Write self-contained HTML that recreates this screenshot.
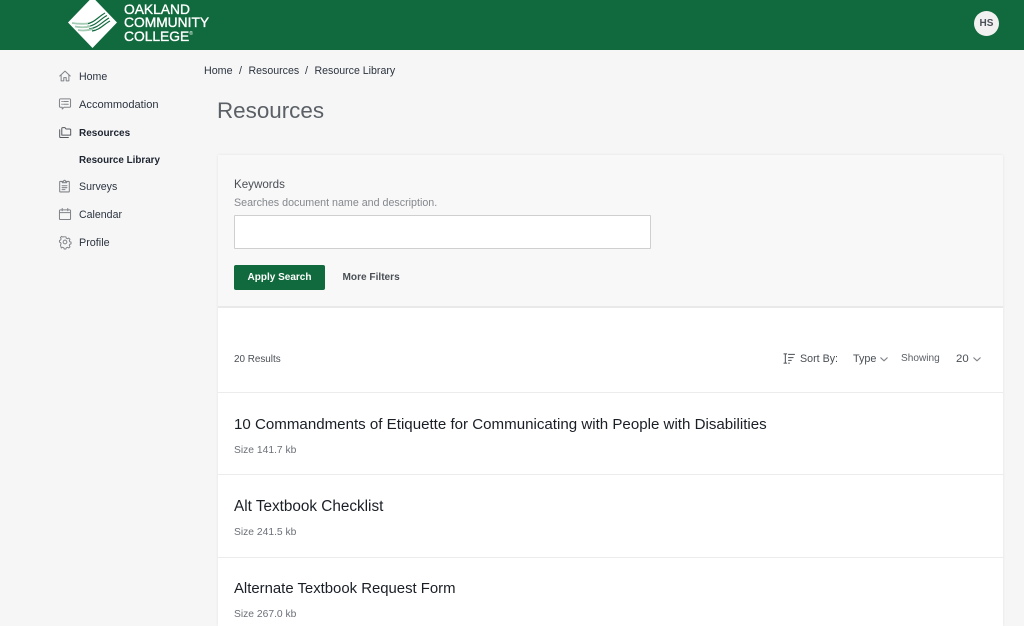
<!DOCTYPE html>
<html lang="en"><head><meta charset="utf-8"><title>Resources</title>
<style>
html,body{margin:0;padding:0;width:1024px;height:626px;overflow:hidden}
body{position:relative;background:#f6f6f6;font-family:"Liberation Sans",sans-serif;color:#212529}
.t{position:absolute;white-space:nowrap;line-height:1}
.hdr{position:absolute;left:0;top:0;width:1024px;height:50px;background:#116a3d}
svg{position:absolute;overflow:visible}
.nav{font-size:10.6px;color:#2c3440}
.b{font-weight:bold;color:#1d2430;font-size:10px}
.card{position:absolute;left:218px;top:155px;width:785px;height:471px;background:#fff;box-shadow:0 0 3px rgba(0,0,0,.08)}
.search{position:absolute;left:218px;top:155px;width:785px;height:153px;background:#f8f8f8;border-bottom:2px solid #e9e9e9;box-sizing:border-box}
.line{position:absolute;left:218px;width:785px;height:1px;background:#ececec}
.title{font-size:15.1px;color:#1a1f26}
.size{font-size:10.300px;color:#6b7077}
.i{fill:none;stroke:#808489;stroke-width:1.100;stroke-linecap:round;stroke-linejoin:round}
</style></head><body>
<div class="hdr"></div>
<svg style="left:68px;top:-3px" width="50" height="52" viewBox="0 0 50 52">
<polygon points="24.500,0 49,25.500 24.500,51 0,25.500" fill="#fff"/>
<g fill="none" stroke="#116a3d" stroke-width="1.200">
<path d="M18 27C26 26 30 20 37 16"/><path d="M19 29.500C28 29 32 22 39 18.500"/><path d="M21 32C30 31 34 25 41 21"/><path d="M24 34C32 33 36 27 42 24"/>
</g>
<g fill="none" stroke="#a5ccb5" stroke-width="1.800"><path d="M4 26C10 27 15 27 20 26.500"/><path d="M7 29.500C12 30.500 17 30.500 22 29.500"/><path d="M10 33C15 34 20 33.500 25 32"/></g>
</svg>
<div class="t" style="left:124px;top:3px;font-size:13.800px;line-height:13.400px;color:#fff;letter-spacing:0;white-space:normal;width:100px;-webkit-text-stroke:.35px #fff">OAKLAND<br>COMMUNITY<br>COLLEGE<sup style="font-size:5px;line-height:0;vertical-align:6px;-webkit-text-stroke:0">®</sup></div>
<div style="position:absolute;left:974px;top:11px;width:25px;height:25px;border-radius:50%;background:#f1f1f1"></div>
<div class="t" style="left:974px;top:19px;width:25px;text-align:center;font-size:10px;font-weight:bold;color:#4a5058">HS</div>

<svg class="i" style="left:58.500px;top:70px" width="12" height="12" viewBox="0 0 13 13"><path d="M.8 6.500 6.500 1.200l5.700 5.300M2.300 5.500v6.300h2.900V8.300h2.600v3.500h2.900V5.500"/></svg>
<div class="t nav" style="left:79px;top:72px">Home</div>
<svg class="i" style="left:58.500px;top:98px" width="12" height="12" viewBox="0 0 13 13"><path d="M1.500 1h10a1 1 0 0 1 1 1v7a1 1 0 0 1-1 1H5.500L3.500 12v-2h-2a1 1 0 0 1-1-1V2a1 1 0 0 1 1-1zM3 3.800h.7M5 3.800h5M3 6.800h.7M5 6.800h5"/></svg>
<div class="t nav" style="left:79px;top:100px;font-size:11.100px">Accommodation</div>
<svg class="i" style="left:58.500px;top:127px;stroke:#555a60" width="12" height="11" viewBox="0 0 13 12"><path d="M.7 3v7.500a1 1 0 0 0 1 1h8.500M3 8.800V1.700a1 1 0 0 1 1-1h2.500l1.200 1.500h4a1 1 0 0 1 1 1v5.600z"/></svg>
<div class="t nav b" style="left:79px;top:129px">Resources</div>
<div class="t nav b" style="left:79px;top:156px;font-size:9.850px">Resource Library</div>
<svg class="i" style="left:59px;top:179px" width="11" height="13.500" viewBox="0 0 11 14"><path d="M3.200 2.500H1a.6.6 0 0 0-.5.600v9.700a.6.6 0 0 0 .5.600h9a.6.6 0 0 0 .5-.6V3.100a.6.6 0 0 0-.5-.6H7.800M3.200 3.800V2.500H4.500C4.500 1 6.500 1 6.500 2.500h1.300v1.300zM3 7h5M3 9h5M3 11h3"/></svg>
<div class="t nav" style="left:79px;top:182px">Surveys</div>
<svg class="i" style="left:58.500px;top:208px" width="12" height="12" viewBox="0 0 13 13"><path d="M1.500 2h10a1 1 0 0 1 1 1v8.500a1 1 0 0 1-1 1h-10a1 1 0 0 1-1-1V3a1 1 0 0 1 1-1zM.5 5h12M3.500.5v2.500M9.500.5v2.500"/></svg>
<div class="t nav" style="left:79px;top:210px">Calendar</div>
<svg class="i" style="left:58.500px;top:236px" width="12" height="12" viewBox="0 0 13 13"><circle cx="6.500" cy="6.500" r="2"/><path d="M5.500.7h2l.4 1.600 1.400.6 1.400-.8 1.400 1.400-.8 1.400.6 1.400 1.400.4v2l-1.400.4-.6 1.400.8 1.400-1.400 1.400-1.400-.8-1.400.6-.4 1.400h-2l-.4-1.400-1.400-.6-1.400.8L1.300 10l.8-1.400-.6-1.400L.2 6.800v-2l1.300-.4.6-1.400-.8-1.400L2.700.2l1.400.8 1-.4z" transform="translate(.3 .2) scale(.96)"/></svg>
<div class="t nav" style="left:79px;top:238px;font-size:10.800px">Profile</div>

<div class="t" style="left:204px;top:66px;font-size:10.700px;color:#2c3440">Home</div>
<div class="t" style="left:239px;top:66px;font-size:10.700px;color:#2c3440">/</div>
<div class="t" style="left:248.500px;top:66px;font-size:10.600px;color:#2c3440">Resources</div>
<div class="t" style="left:305px;top:66px;font-size:10.700px;color:#2c3440">/</div>
<div class="t" style="left:314.500px;top:66px;font-size:10.600px;color:#2c3440">Resource Library</div>
<div class="t" style="left:217px;top:100px;font-size:22.400px;color:#5b6066">Resources</div>

<div class="card"></div>
<div class="search"></div>
<div class="t" style="left:234px;top:179px;font-size:11.600px;color:#4a4f55">Keywords</div>
<div class="t" style="left:234px;top:198px;font-size:10.700px;color:#84888d">Searches document name and description.</div>
<div style="position:absolute;left:234px;top:215px;width:417px;height:34px;box-sizing:border-box;background:#fff;border:1px solid #cfcfcf;border-radius:1px"></div>
<div style="position:absolute;left:234px;top:265px;width:91px;height:25px;background:#116a3d;border-radius:2px"></div>
<div class="t" style="left:234.500px;top:273px;width:90px;text-align:center;font-size:10px;font-weight:bold;color:#fff">Apply Search</div>
<div class="t" style="left:342.500px;top:273px;font-size:10.100px;font-weight:bold;color:#4a4f55">More Filters</div>

<div class="t" style="left:234px;top:355px;font-size:9.900px;color:#4a4f55">20 Results</div>
<svg class="i" style="left:782px;top:353px;stroke:#4a4f55" width="14" height="11" viewBox="0 0 14 12"><path d="M3 1v10M1.500 1h3M1.500 11h3M6.500 1.500h6.500M6.500 5h5M6.500 8h3M6.500 11h1"/></svg>
<div class="t" style="left:800px;top:354px;font-size:10.700px;color:#4a4f55">Sort By:</div>
<div class="t" style="left:853px;top:354px;font-size:10.800px;color:#4a4f55">Type</div>
<svg class="i" style="left:880px;top:357px" width="8" height="5" viewBox="0 0 8 5"><path d="M.8.800 4 3.800 7.200.800"/></svg>
<div class="t" style="left:901px;top:354px;font-size:10.100px;color:#5a5f65">Showing</div>
<div class="t" style="left:956px;top:354px;font-size:11.400px;color:#4a4f55">20</div>
<svg class="i" style="left:973px;top:357px" width="8" height="5" viewBox="0 0 8 5"><path d="M.8.800 4 3.800 7.200.800"/></svg>

<div class="line" style="top:392px"></div>
<div class="t title" style="left:234px;top:417px">10 Commandments of Etiquette for Communicating with People with Disabilities</div>
<div class="t size" style="left:234px;top:446px">Size 141.7 kb</div>
<div class="line" style="top:474px"></div>
<div class="t title" style="left:234px;top:499px;font-size:15.300px">Alt Textbook Checklist</div>
<div class="t size" style="left:234px;top:528px">Size 241.5 kb</div>
<div class="line" style="top:557px"></div>
<div class="t title" style="left:234px;top:582px;font-size:14.900px">Alternate Textbook Request Form</div>
<div class="t size" style="left:234px;top:610px">Size 267.0 kb</div>
</body></html>
